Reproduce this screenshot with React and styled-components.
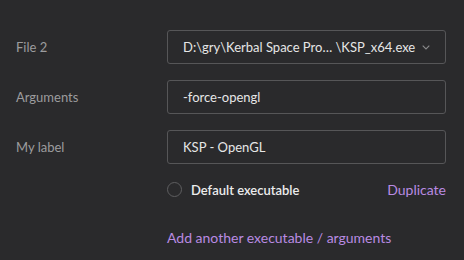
import React from "react";
import styled, { createGlobalStyle } from "styled-components";

const GlobalStyle = createGlobalStyle`
  html, body {
    margin: 0;
    padding: 0;
    background: #2a2a2c;
  }
`;

const Page = styled.div`
  width: 464px;
  height: 260px;
  box-sizing: border-box;
  padding: 30px 18px 0 16px;
  background: #2a2a2c;
  font-family: Lato, "Open Sans", sans-serif;
  font-size: 13px;
`;

const Form = styled.div`
  display: grid;
  grid-template-columns: 151px 1fr;
  row-gap: 16px;
  align-items: center;
`;

const Label = styled.div`
  color: #9c9c9e;
  font-size: 13px;
`;

const Field = styled.div`
  height: 34px;
  box-sizing: border-box;
  border: 1px solid #565658;
  border-radius: 3px;
  display: flex;
  align-items: center;
  padding: 0 16px 0 15px;
  color: #e6e6e6;
  font-size: 13px;
  white-space: nowrap;
  overflow: hidden;
`;

const Value = styled.span`
  flex: 1;
`;

const Chevron = styled.svg`
  width: 8px;
  height: 5px;
  margin-left: 7px;
  flex-shrink: 0;
`;

const OptionRow = styled.div`
  grid-column: 2;
  display: flex;
  align-items: center;
  justify-content: space-between;
  margin-top: 1px;
`;

const Radio = styled.label`
  display: flex;
  align-items: center;
  gap: 9px;
  color: #ececec;
  font-weight: 600;
`;

const Circle = styled.span`
  width: 13px;
  height: 13px;
  border: 1px solid #5e5e60;
  border-radius: 50%;
`;

const Link = styled.a`
  color: #b98ae2;
  font-size: 14px;
  cursor: pointer;
`;

const AddRow = styled.div`
  grid-column: 2;
  margin-top: 15px;
`;

const rows = [
  { label: "File 2", value: "D:\\gry\\Kerbal Space Pro\u2026 \\KSP_x64.exe", select: true },
  { label: "Arguments", value: "-force-opengl" },
  { label: "My label", value: "KSP - OpenGL" },
];

const App = () => {
  return (
    <Page>
      <GlobalStyle />
      <Form>
        {rows.map((r) => (
          <React.Fragment key={r.label}>
            <Label>{r.label}</Label>
            <Field>
              <Value>{r.value}</Value>
              {r.select && (
                <Chevron viewBox="0 0 8 5">
                  <path d="M0.7 0.7L4 4l3.3-3.3" stroke="#8a8a8c" strokeWidth="1.1" fill="none" />
                </Chevron>
              )}
            </Field>
          </React.Fragment>
        ))}
        <OptionRow>
          <Radio>
            <Circle />
            Default executable
          </Radio>
          <Link>Duplicate</Link>
        </OptionRow>
        <AddRow>
          <Link>Add another executable / arguments</Link>
        </AddRow>
      </Form>
    </Page>
  );
};

export default App;
